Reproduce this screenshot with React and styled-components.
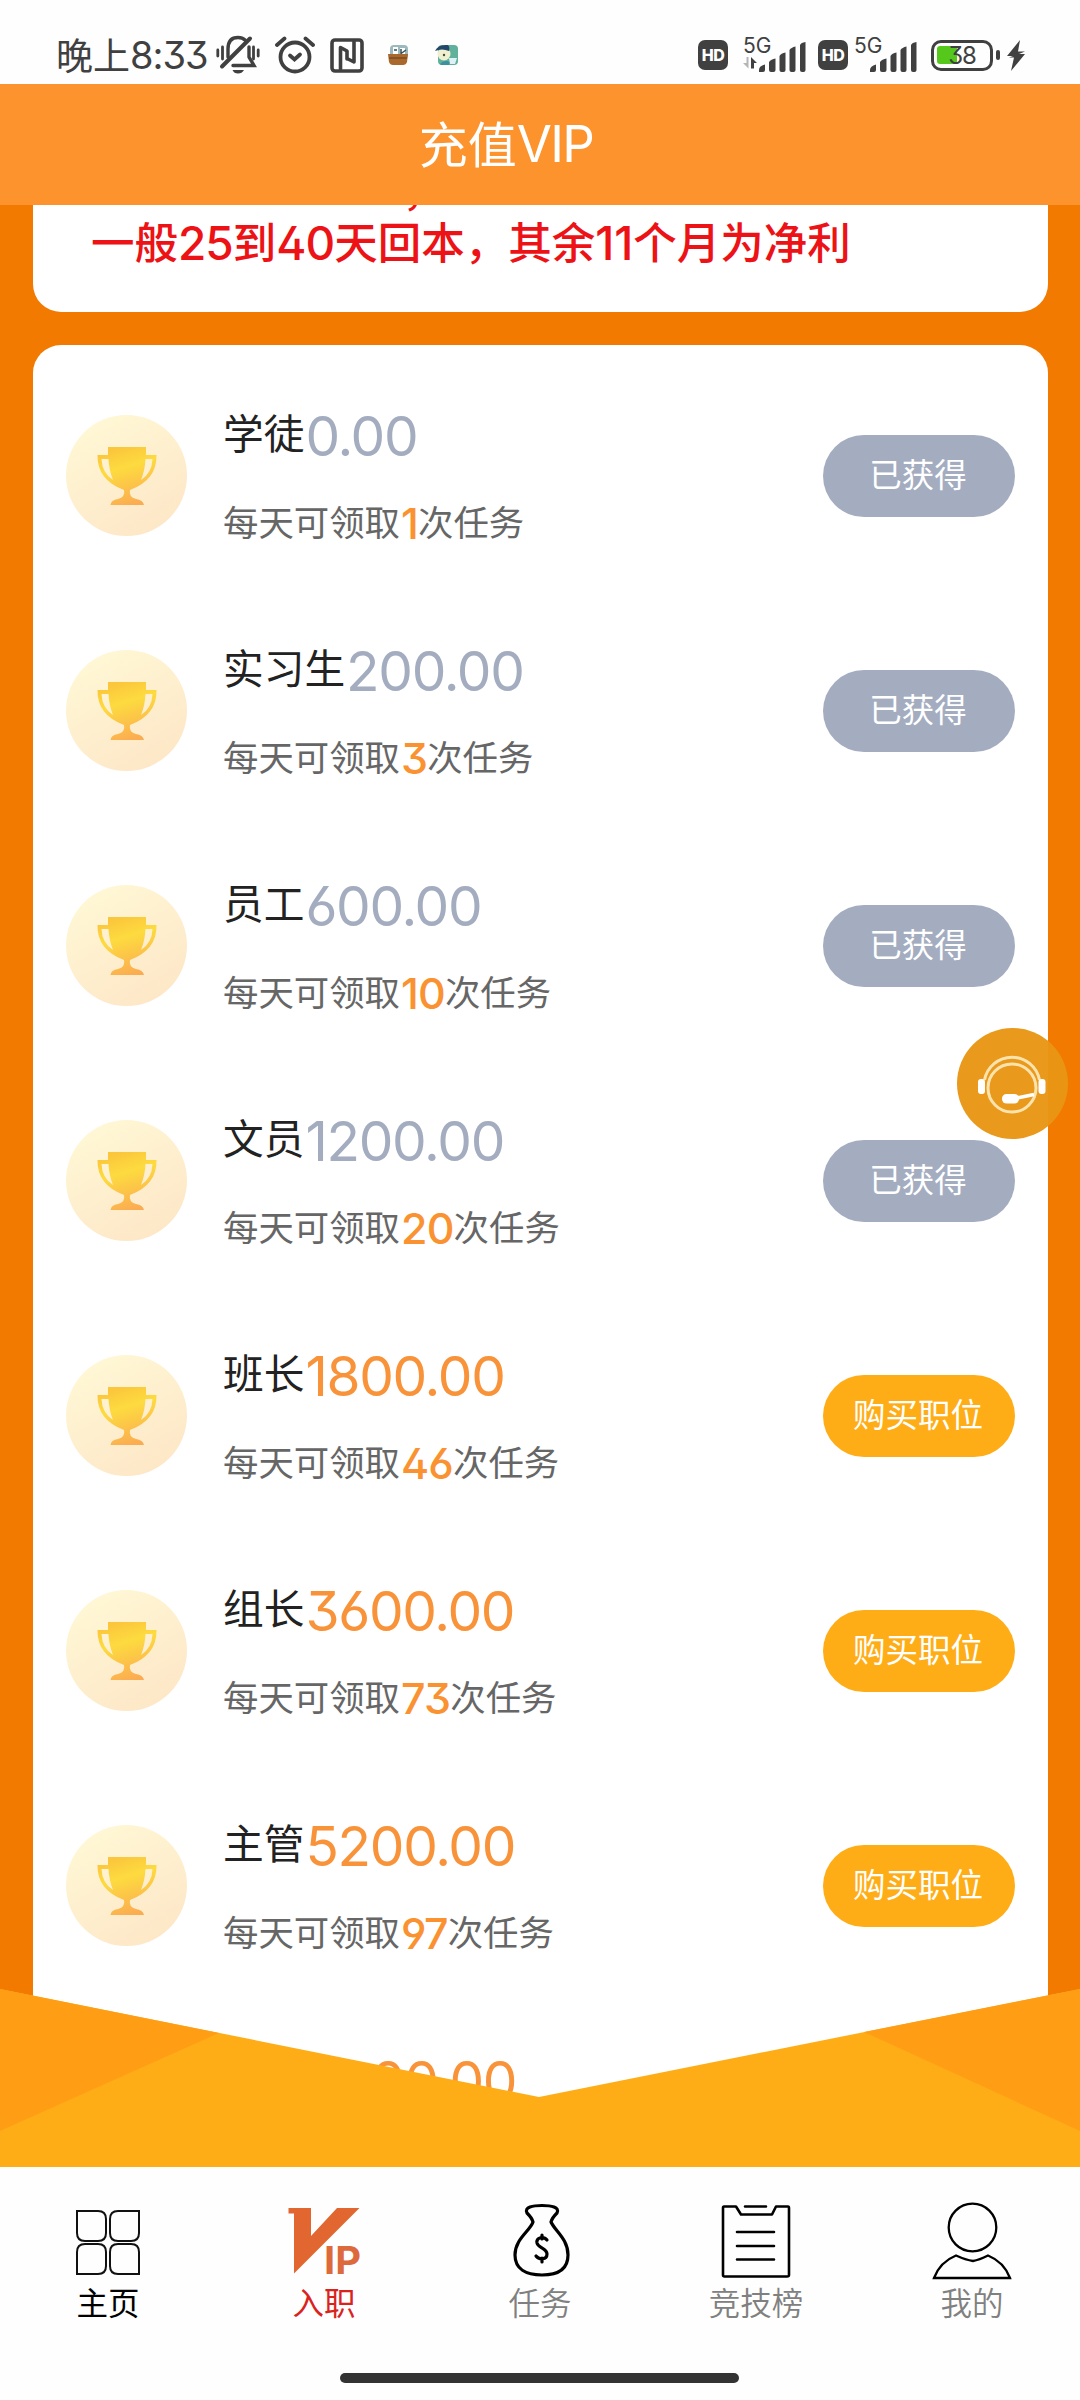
import React from 'react';
import styled, { createGlobalStyle } from 'styled-components';

const GlobalStyle = createGlobalStyle`
  * {
    box-sizing: border-box;
  }

  body {
    margin: 0;
    background: #fff;
    font-family: "Noto Sans CJK SC", "Noto Sans", sans-serif;
  }

  svg {
    display: block;
    flex: none;
  }
`;

const Screen = styled.div`
  display: flex;
  flex-direction: column;
  width: 1080px;
  height: 2400px;
  overflow: hidden;
  background: #fefefe;
`;

/* digits are set in Inter with its flat-top 3 and open 4, 6 and 9 */
const Digits = styled.span`
  font-family: Inter, "Noto Sans", sans-serif;
  font-feature-settings: "cv02", "cv03", "cv04", "cv09";
`;

const StatusBar = styled.div`
  display: flex;
  flex: none;
  align-items: flex-start;
  justify-content: space-between;
  height: 84px;
  padding: 30px 54px 0 56px;
  color: #404040;
`;

const StatusGroup = styled.div`
  display: flex;
  align-items: center;
  height: 50px;
  gap: ${props => props.$gap || 0}px;
`;

const StatusApps = styled(StatusGroup)`
  margin-left: 22px;
`;

const Clock = styled.div`
  display: flex;
  align-items: center;
  width: 160px;
  padding-bottom: 3px;
  font-size: 37px;
  line-height: 46px;
  font-weight: 400;
  white-space: nowrap;
`;

const ClockDigits = styled(Digits)`
  font-size: 38px;
  letter-spacing: -1px;
  font-weight: 430;
  padding-top: 3px;
`;

const Header = styled.header`
  flex: none;
  display: flex;
  align-items: center;
  justify-content: center;
  height: 121px;
  padding: 0 68px 6px 0;
  background: #fd932d;
  color: #fff;
  font-size: 49px;
  line-height: 60px;
`;

const HeaderLatin = styled(Digits)`
  font-size: 51px;
  font-weight: 400;
  letter-spacing: -1.6px;
  padding-top: 5px;
`;

const Content = styled.main`
  position: relative;
  flex: none;
  height: 1962px;
  overflow: hidden;
  background: #f27a00;
`;

const Notice = styled.section`
  display: flex;
  flex-direction: column;
  justify-content: flex-end;
  height: 107px;
  margin: 0 32px 33px 33px;
  padding: 0 58px 42px;
  overflow: hidden;
  border-radius: 0 0 28px 28px;
  background: #fff;
`;

const NoticeLine = styled.div`
  display: flex;
  flex: none;
  align-items: center;
  height: 58px;
  color: #ed1216;
  font-size: 43.5px;
  font-weight: 500;
  line-height: 58px;
  white-space: nowrap;
`;

/* the line above is scrolled under the header, only its comma hangs out */
const ScrolledLine = styled(NoticeLine)`
  margin-bottom: -5px;
  padding-left: 311px;
`;

const NoticeDigits = styled(Digits)`
  font-size: 46px;
  font-weight: 450;
  letter-spacing: ${props => props.$spacing}px;
  padding-top: 4px;
`;

const LevelCard = styled.section`
  height: 1900px;
  margin: 0 32px 0 33px;
  padding: 13px 33px 0;
  border-radius: 28px;
  background: #fff;
`;

const LevelRow = styled.div`
  display: flex;
  align-items: center;
  height: 235px;
`;

const LevelInfo = styled.div`
  flex: 1;
  display: flex;
  flex-direction: column;
  gap: 32px;
  padding: 0 0 0 36px;
  margin-top: 2px;
`;

const LevelTitle = styled.div`
  display: flex;
  align-items: center;
  height: 60px;
  color: #222;
  font-size: 40.7px;
  line-height: 60px;
  white-space: nowrap;
`;

const LevelName = styled.span`
  padding-bottom: 7px;
`;

const Price = styled(Digits)`
  font-size: 55px;
  font-weight: 400;
  letter-spacing: -1.3px;
  padding-left: 1px;
  color: ${props => (props.$owned ? '#a4adc0' : '#f9933a')};
`;

const LevelTasks = styled.div`
  display: flex;
  align-items: center;
  height: 50px;
  color: #666;
  font-size: 35.4px;
  line-height: 50px;
  white-space: nowrap;
`;

const TaskText = styled.span`
  padding-bottom: 4px;
`;

const TaskCount = styled(Digits)`
  font-size: 43px;
  font-weight: 450;
  letter-spacing: -0.8px;
  padding: 0 0 0 1px;
  color: #fa9232;
`;

const LevelButton = styled.button`
  width: 192px;
  height: 82px;
  padding: 0 2px 7px 0;
  border: 0;
  border-radius: 41px;
  background: ${props => (props.$owned ? '#a4adc0' : '#ffad17')};
  color: #fff;
  font-family: inherit;
  font-size: 32.5px;
`;

const Envelope = styled.svg`
  position: absolute;
  left: 0;
  bottom: 0;
`;

const ServiceButton = styled.div`
  position: absolute;
  top: 823px;
  right: 12px;
  width: 111px;
  height: 111px;
  border-radius: 50%;
  background: rgba(232, 150, 20, 0.97);
`;

const NavBar = styled.nav`
  flex: none;
  display: grid;
  grid-template-columns: repeat(5, 1fr);
  height: 206px;
  padding-top: 30px;
  background: #fefefe;
`;

const NavItem = styled.div`
  display: flex;
  flex-direction: column;
  align-items: center;
  color: ${props => props.$color};
  font-size: 31.5px;
  font-weight: ${props => props.$weight || 350};
  line-height: 46px;
`;

const NavIcon = styled.svg`
  margin-bottom: -5px;
`;

const HomeIndicator = styled.div`
  flex: none;
  align-self: center;
  width: 399px;
  height: 10px;
  margin-right: 2px;
  border-radius: 5px;
  background: #333;
`;

const HdBadge = styled.span`
  display: flex;
  align-items: center;
  justify-content: center;
  width: 30px;
  height: 30px;
  border-radius: 7px;
  background: #404040;
  color: #fff;
  font: 800 16px Inter, sans-serif;
  letter-spacing: -0.5px;
`;

const Signal = () => (
  <svg width="49" height="32" viewBox="0 0 49 32" fill="#404040">
    <path d="M1 31V29Q1 25 7 23.500V29Q7 31 5 31Z" />
    <path d="M11 29V21Q13 18 17.500 17.500V29Q17.500 31 15.500 31H13Q11 31 11 29Z" />
    <path d="M21.500 29V15Q23 12 27.500 11.500V29Q27.500 31 25.500 31H23.500Q21.500 31 21.500 29Z" />
    <path d="M31.500 29V9Q33 6.500 37.500 5.500V29Q37.500 31 35.500 31H33.500Q31.500 31 31.500 29Z" />
    <path d="M42 29V4Q43 1.500 47.500 1V29Q47.500 31 45.500 31H44Q42 31 42 29Z" />
  </svg>
);

const Network = styled.div`
  display: grid;
  grid-template-columns: ${props => props.$label}px 49px;
  height: 36px;
  align-items: end;
`;

const NetworkLabel = styled.div`
  align-self: stretch;
  display: flex;
  flex-direction: column;
  align-items: flex-start;
  font: 400 21px/22px Inter, sans-serif;
  margin: -2px -14px 0 ${props => props.$shift}px;
`;

const MutedBell = () => (
  <svg width="44" height="40" viewBox="0 0 44 40" fill="none" stroke="#404040" strokeWidth="3.400" strokeLinecap="round">
    <path d="M1.800 15v6M6.500 12v12M42.200 15v6M37.500 12v12" strokeWidth="2.800" />
    <path d="M12 22V14C12 6 16 2.500 22 2.500C25 2.500 27.500 3.500 29 5M33 12V22L38 30.500H17" />
    <path d="M6 31.500L34 3.500" strokeWidth="4" />
    <path d="M16.500 35H28Q26 38.500 22 38.500T16.500 35Z" fill="#404040" stroke="none" />
  </svg>
);

const AlarmIcon = () => (
  <svg width="40" height="38" viewBox="0 0 40 38" fill="none" stroke="#404040" strokeWidth="3.800" strokeLinecap="round">
    <circle cx="20" cy="21" r="14.500" />
    <path d="M2 9L9.500 2.500M38 9L30.500 2.500" />
    <path d="M15 19.500L19.500 23.500L25 18.500" />
  </svg>
);

const NfcIcon = () => (
  <svg width="34" height="36" viewBox="0 0 34 36" fill="none" stroke="#404040" strokeWidth="3.600" strokeLinecap="round" strokeLinejoin="round">
    <rect x="2" y="3" width="30" height="31" rx="3" />
    <path d="M10.500 32V10.500L17 14V22M24 4.500V25L17 21.500" />
  </svg>
);

const BoatApp = () => (
  <svg width="24" height="24" viewBox="0 0 24 24">
    <rect x="4" y="2" width="18" height="14" rx="4" fill="#9cb9bd" />
    <path d="M7 4h5v7H7zM14 5h5v6h-5z" fill="#fff" />
    <path d="M8 7h3M15 6v5M13 12L20 7" stroke="#36505a" strokeWidth="1.500" />
    <path d="M2 11H22L21 19Q20 22 17 22H7Q4 22 3 19Z" fill="#a9682c" />
    <path d="M3 15H21" stroke="#7d4b23" strokeWidth="1.500" />
  </svg>
);

const CapApp = () => (
  <svg width="24" height="24" viewBox="0 0 24 24">
    <rect x="3" y="2" width="20" height="20" rx="4" fill="#5fb19b" />
    <circle cx="9" cy="11" r="6.500" fill="#eef0cf" />
    <path d="M0 8Q3 1 13 2Q15 4 14 8Q7 5 0 8Z" fill="#24486c" />
    <path d="M5 21Q9 16 15 19L14 22H6Z" fill="#3e8fa0" />
    <path d="M14 15H22L20 21H15Z" fill="#dff1f4" />
    <circle cx="9" cy="12" r="1.200" fill="#4a4a3a" />
  </svg>
);

const DataArrows = () => (
  <svg width="14" height="12" viewBox="0 0 14 12">
    <path d="M5.500 0V11.500L0 6H3.500V0Z" fill="#b5b5b5" />
    <path d="M8 11.500V0L14 6H11V11.500Z" fill="#404040" />
  </svg>
);

const Battery = styled.div`
  position: relative;
  display: flex;
  align-items: center;
  justify-content: center;
  width: 62px;
  height: 31px;
  margin-left: 2px;
  border: 3.5px solid #404040;
  border-radius: 10px;
  font: 400 24px Inter, sans-serif;
  letter-spacing: -1px;

  &::before {
    content: '';
    position: absolute;
    left: 3px;
    top: 3px;
    width: 20px;
    height: 18px;
    border-radius: 3px;
    background: #56c81c;
  }

  &::after {
    content: '';
    position: absolute;
    right: -10px;
    top: 7px;
    width: 4px;
    height: 10px;
    border-radius: 2px;
    background: #404040;
  }
`;

const BatteryLevel = styled(Digits)`
  position: relative;
`;

const Bolt = styled.svg`
  margin-left: 14px;
`;

const Trophy = ({ id }) => (
  <svg width="121" height="121" viewBox="0 0 121 121">
    <defs>
      <linearGradient id={`disc-${id}`} x1="0.2" y1="0" x2="0.8" y2="1">
        <stop offset="0" stopColor="#fff8d6" />
        <stop offset="1" stopColor="#fde6c6" />
      </linearGradient>
      <linearGradient id={`cup-${id}`} x1="0.35" y1="0" x2="0.65" y2="1">
        <stop offset="0" stopColor="#fbc53c" />
        <stop offset="0.35" stopColor="#fddb3f" />
        <stop offset="1" stopColor="#fbab52" />
      </linearGradient>
    </defs>
    <circle cx="60.500" cy="60.500" r="60.500" fill={`url(#disc-${id})`} />
    <path
      fill={`url(#cup-${id})`}
      fillRule="evenodd"
      d="M42 32H80V40H90.500Q91 65 64 75Q62.500 82 70 84Q77 85 78 90H44.500Q45 85 52 84Q59.500 82 58 75Q31 65 31.500 40H42ZM35.500 44Q36 58 47 65Q43 55 42.500 44ZM86.500 44H79.500Q79 55 75 65Q86 58 86.500 44Z"
    />
  </svg>
);

const HeadsetIcon = () => (
  <svg width="111" height="111" viewBox="0 0 111 111" fill="none" stroke="#fff">
    <g stroke="#ffe3ad" strokeWidth="3">
      <circle cx="55" cy="60" r="24" />
      <path d="M27.500 52A28 28 0 0 1 82.500 52" />
    </g>
    <rect x="21" y="51" width="7" height="15" rx="3" fill="#fff" stroke="none" />
    <rect x="81.500" y="51" width="7" height="15" rx="3" fill="#fff" stroke="none" />
    <path d="M60 70L77 66.500" strokeWidth="3.500" />
    <rect x="45" y="66" width="17" height="9.500" rx="4.500" fill="#fff" stroke="none" />
  </svg>
);

const levels = [
  { name: '学徒', price: '0.00', tasks: 1, owned: true },
  { name: '实习生', price: '200.00', tasks: 3, owned: true },
  { name: '员工', price: '600.00', tasks: 10, owned: true },
  { name: '文员', price: '1200.00', tasks: 20, owned: true },
  { name: '班长', price: '1800.00', tasks: 46 },
  { name: '组长', price: '3600.00', tasks: 73 },
  { name: '主管', price: '5200.00', tasks: 97 },
  { name: '经理', price: '8800.00' },
];

const Level = ({ index, name, price, tasks, owned }) => (
  <LevelRow>
    <Trophy id={index} />
    <LevelInfo>
      <LevelTitle>
        <LevelName>{name}</LevelName>
        <Price $owned={owned}>{price}</Price>
      </LevelTitle>
      <LevelTasks>
        {tasks && (
          <>
            <TaskText>每天可领取</TaskText>
            <TaskCount>{tasks}</TaskCount>
            <TaskText>次任务</TaskText>
          </>
        )}
      </LevelTasks>
    </LevelInfo>
    {tasks && (
      <LevelButton $owned={owned}>{owned ? '已获得' : '购买职位'}</LevelButton>
    )}
  </LevelRow>
);

const App = () => (
  <>
    <GlobalStyle />
    <Screen>
      <StatusBar>
        <StatusGroup>
          <Clock>
            晚上<ClockDigits>8:33</ClockDigits>
          </Clock>
          <StatusGroup $gap={15}>
            <MutedBell />
            <AlarmIcon />
            <NfcIcon />
          </StatusGroup>
          <StatusApps $gap={25}>
            <BoatApp />
            <CapApp />
          </StatusApps>
        </StatusGroup>
        <StatusGroup>
          <StatusGroup $gap={11}>
            <HdBadge>HD</HdBadge>
            <Network $label={19}>
              <NetworkLabel $shift={4}>
                5G
                <DataArrows />
              </NetworkLabel>
              <Signal />
            </Network>
            <HdBadge>HD</HdBadge>
            <Network $label={10}>
              <NetworkLabel $shift={-5}>5G</NetworkLabel>
              <Signal />
            </Network>
            <Battery>
              <BatteryLevel>38</BatteryLevel>
            </Battery>
          </StatusGroup>
          <Bolt width="19" height="31" viewBox="0 0 19 31">
            <path d="M13 0L0 16H6L2 17.500H7L4 31L18 14H12L18 11.500H11Z" fill="#404040" />
          </Bolt>
        </StatusGroup>
      </StatusBar>

      <Header>
        充值<HeaderLatin>VIP</HeaderLatin>
      </Header>

      <Content>
        <Notice>
          <ScrolledLine>，</ScrolledLine>
          <NoticeLine>
            一般<NoticeDigits $spacing={-1}>25</NoticeDigits>到
            <NoticeDigits $spacing={-1}>40</NoticeDigits>天回本，其余
            <NoticeDigits $spacing={0}>11</NoticeDigits>个月为净利
          </NoticeLine>
        </Notice>

        <LevelCard>
          {levels.map((level, index) => (
            <Level key={level.name} index={index} {...level} />
          ))}
        </LevelCard>

        <Envelope width="1080" height="178" viewBox="0 0 1080 178">
          <path d="M0 0L539 108L1080 0V178H0Z" fill="#ffad17" />
          <path d="M0 0L219 44L0 142ZM1080 0L864 43L1080 142Z" fill="#ff9e15" />
        </Envelope>

        <ServiceButton>
          <HeadsetIcon />
        </ServiceButton>
      </Content>

      <NavBar>
        <NavItem $color="#000" $weight={400}>
          <NavIcon width="80" height="86" viewBox="0 0 80 86" fill="none" stroke="#111" strokeWidth="2">
            <path d="M9 14H30Q38 14 38 22V36Q38 44 30 44H17Q9 44 9 36Z" />
            <path d="M71 14H50Q42 14 42 22V36Q42 44 50 44H63Q71 44 71 36Z" />
            <path d="M9 77H30Q38 77 38 69V55Q38 47 30 47H17Q9 47 9 55Z" />
            <path d="M71 77H50Q42 77 42 69V55Q42 47 50 47H63Q71 47 71 55Z" />
          </NavIcon>
          主页
        </NavItem>
        <NavItem $color="#d9231c" $weight={400}>
          <NavIcon width="80" height="86" viewBox="0 0 80 86">
            <path d="M4.500 11H27V39L53 11H75.500L10 76.500V16.500H4.500Z" fill="#e1662f" />
            <text x="40" y="77" fill="#dd6a3c" fontFamily="Inter, sans-serif" fontSize="38" fontWeight="700" textLength="37" lengthAdjust="spacingAndGlyphs">
              IP
            </text>
          </NavIcon>
          入职
        </NavItem>
        <NavItem $color="#808080">
          <NavIcon width="80" height="86" viewBox="0 0 80 86" fill="none" stroke="#000" strokeWidth="3.200" strokeLinecap="round" strokeLinejoin="round">
            <path d="M33 25Q32 21 27 16C24 10 33 8.500 42 8.500S60 10 57 16Q52 21 51 25C55 34 68 42 68 58C68 72 58 78 42 78S15 72 15 58C15 42 30 34 33 25Z" />
            <path d="M47 43C44 39 36 40 37 46C38 51 47 51 47 57C47 63 39 63 36 59M42 38V42M42 61V65" />
          </NavIcon>
          任务
        </NavItem>
        <NavItem $color="#808080">
          <NavIcon width="80" height="86" viewBox="0 0 80 86" fill="none" stroke="#000" strokeWidth="2.600" strokeLinecap="round" strokeLinejoin="round">
            <path d="M20 9.500H8Q7 9.500 7 11V78Q7 79.500 8.500 79.500H71Q73 79.500 73 78V11Q73 9.500 72 9.500H60L56 17.500H25Z" />
            <path d="M29 9.500H50M21 35H58M21 49H58M21 62.500H58" />
          </NavIcon>
          竞技榜
        </NavItem>
        <NavItem $color="#808080">
          <NavIcon width="80" height="86" viewBox="0 0 80 86" fill="none" stroke="#000" strokeWidth="2.300">
            <circle cx="40.500" cy="30.500" r="23.800" />
            <path d="M2 81Q8 65 24 58.500Q34 63 41 64Q47 63 56 58.500Q72 65 78 81Z" />
          </NavIcon>
          我的
        </NavItem>
      </NavBar>
      <HomeIndicator />
    </Screen>
  </>
);

export default App;
